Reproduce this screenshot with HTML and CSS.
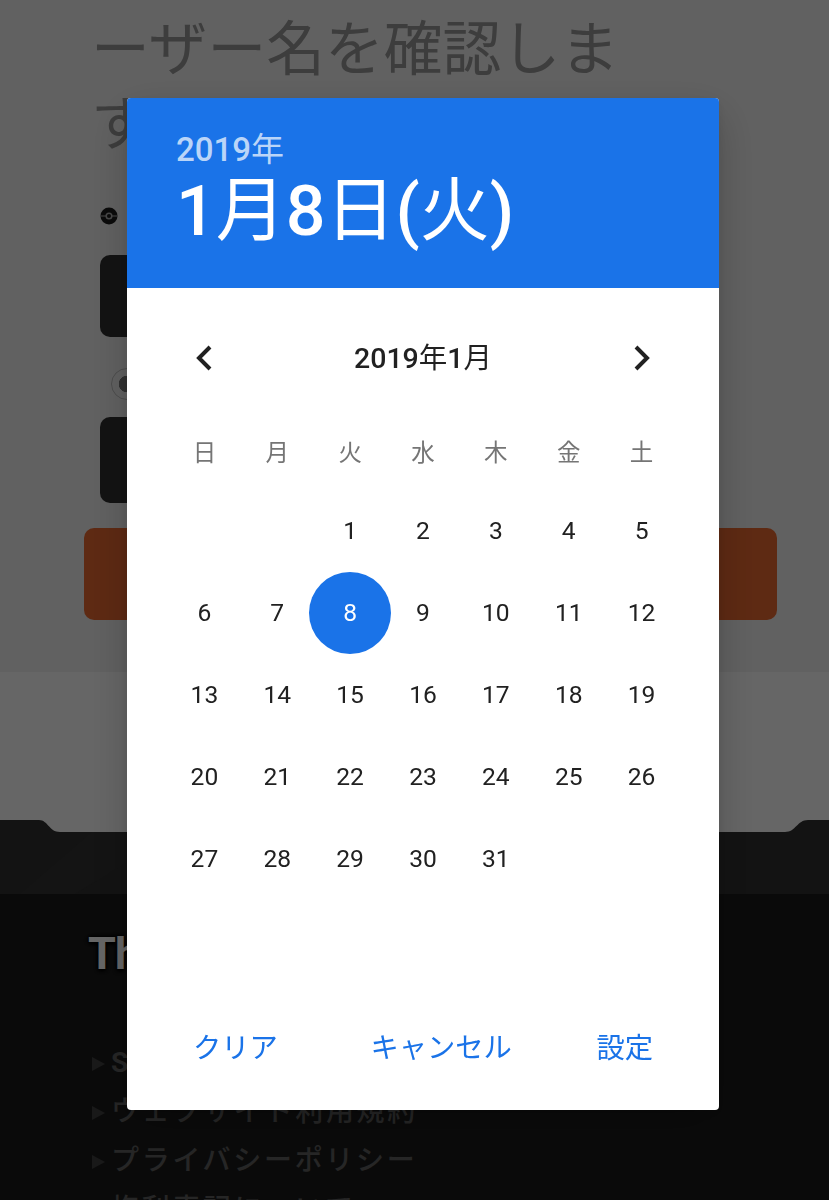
FILE: index.html
```
<!DOCTYPE html>
<html lang="ja">
  <head>
    <meta charset="UTF-8" />
    <meta name="viewport" content="width=device-width, initial-scale=1.0" />
    <title>生年月日</title>
    <link rel="stylesheet" href="styles.css">
  </head>
  <body>
    <main class="page">
      <section class="signup">
        <p class="lead">してトレーナーのユーザー名を確認します</p>

        <svg class="ball" viewBox="0 0 18 18">
          <circle cx="9" cy="9" r="8.5" fill="#1c1c1c" />
          <path d="M0 9h18" stroke="#a0a0a0" stroke-width="1.2" />
          <circle cx="9" cy="9" r="2.8" fill="#1c1c1c" stroke="#b4b4b4" stroke-width="1.5" />
        </svg>

        <div class="field"></div>
        <div class="radio"></div>
        <div class="field field-tall"></div>
        <div class="submit"></div>
      </section>

      <section class="gap"></section>

      <footer class="footer">
        <svg class="footer-edge" viewBox="0 0 829 74">
          <path d="M0 0H39C48 0 49 12 60 12H785C796 12 797 0 808 0H829V74H0Z" fill="#303030" />
          <path d="M92 12H127V42L75 74H20Z" fill="#333" opacity=".6" />
        </svg>
        <div class="footer-body">
          <h2>The</h2>
          <ul class="links">
            <li><b>S</b></li>
            <li>ウェブサイト利用規約</li>
            <li>プライバシーポリシー</li>
            <li>権利表記について</li>
          </ul>
        </div>
      </footer>
    </main>

    <div class="backdrop">
      <div class="dialog">
        <header class="dialog-header">
          <div class="year">2019<span class="kanji">年</span></div>
          <div class="date">1<span class="kanji">月</span>8<span class="kanji">日</span>(<span class="kanji">火</span>)</div>
        </header>

        <div class="month-bar">
          <svg class="arrow" viewBox="0 0 24 32"><path d="M18 5L7 16l11 11" /></svg>
          <div class="month">2019<span class="kanji">年</span>1<span class="kanji">月</span></div>
          <svg class="arrow" viewBox="0 0 24 32"><path d="M6 5l11 11L6 27" /></svg>
        </div>

        <div class="weekdays">
          <span>日</span><span>月</span><span>火</span><span>水</span><span>木</span><span>金</span><span>土</span>
        </div>

        <div class="days">
          <span></span><span></span><span>1</span><span>2</span><span>3</span><span>4</span><span>5</span>
          <span>6</span><span>7</span><span class="selected">8</span><span>9</span><span>10</span><span>11</span><span>12</span>
          <span>13</span><span>14</span><span>15</span><span>16</span><span>17</span><span>18</span><span>19</span>
          <span>20</span><span>21</span><span>22</span><span>23</span><span>24</span><span>25</span><span>26</span>
          <span>27</span><span>28</span><span>29</span><span>30</span><span>31</span>
        </div>

        <div class="actions">
          <button>クリア</button>
          <button class="cancel">キャンセル</button>
          <button>設定</button>
        </div>
      </div>
    </div>
  </body>
</html>
```
FILE: styles.css
```
:root {
  --blue: #1a73e8;
  --ink: #212121;
  --field: #303030;
}

* {
  margin: 0;
  padding: 0;
  box-sizing: border-box;
}

body {
  height: 1200px;
  overflow: hidden;
  font-family: Roboto, "Noto Sans CJK JP", sans-serif;
}

.page {
  height: 1200px;
  overflow: hidden;
  background: #fff;
}

.signup {
  display: flow-root;
  height: 672px;
  padding: 0 52px 0 84px;
  background: #f2f2f2;
}

.lead {
  width: 535px;
  margin: -63px 0 0 7px;
  font-size: 58.8px;
  line-height: 75px;
  color: #989898;
  word-break: break-all;
  line-break: anywhere;
}

.ball {
  display: block;
  width: 18px;
  height: 18px;
  margin: 45px 0 0 16px;
}

.field {
  width: 500px;
  height: 82px;
  margin: 30px 0 0 16px;
  border-radius: 10px;
  background: var(--field);
}

.field-tall {
  height: 86px;
  margin-top: 17px;
}

.radio {
  width: 32px;
  height: 32px;
  margin: 31px 0 0 27px;
  border: 1px solid #c0c0c0;
  border-radius: 50%;
  background: radial-gradient(circle, #7b7b7b 8px, transparent 8.5px);
}

.submit {
  height: 92px;
  margin-top: 25px;
  border-radius: 10px;
  background: #eb6930;
}

.gap {
  height: 148px;
}

.footer-edge {
  display: block;
  width: 829px;
  height: 74px;
}

.footer-body {
  height: 306px;
  padding: 29px 88px 0;
  background: #1b1b1b;
}

.footer h2 {
  font-size: 45px;
  line-height: 62px;
  letter-spacing: -1px;
  color: #fff;
  text-shadow: 0 0 4px #000, 0 0 5px #000, 0 2px 4px #000;
}

.links {
  margin-top: 53px;
  list-style: none;
  font-size: 28px;
  font-weight: 500;
  letter-spacing: 2.7px;
  line-height: 49px;
  color: #606060;
}

.links li {
  display: flex;
  align-items: center;
}

.links li::before {
  content: "";
  margin: 2px 6px 0 4px;
  border-style: solid;
  border-width: 7px 0 7px 13px;
  border-color: transparent transparent transparent #404040;
}

.backdrop {
  position: fixed;
  inset: 0;
  padding: 98px 110px 0 127px;
  background: rgba(0, 0, 0, 0.6);
}

.dialog {
  display: flex;
  flex-direction: column;
  height: 1012px;
  overflow: hidden;
  border-radius: 4px;
  background: #fff;
  color: var(--ink);
  box-shadow: 0 16px 44px rgba(0, 0, 0, 0.2), 0 4px 12px rgba(0, 0, 0, 0.08);
}

.kanji {
  font-weight: 400;
}

.dialog-header {
  height: 190px;
  padding: 32px 49px 0;
  background: var(--blue);
  color: #fff;
  font-weight: 500;
}

.year {
  font-size: 33px;
  line-height: 40px;
  color: #bad5f8;
}

.date {
  font-size: 70px;
  line-height: 83px;
}

.month-bar {
  display: flex;
  align-items: center;
  justify-content: space-between;
  height: 140px;
  padding: 0 65px;
}

.arrow {
  width: 24px;
  height: 32px;
  fill: none;
  stroke: var(--ink);
  stroke-width: 4;
}

.month {
  padding-bottom: 5px;
  font-size: 28.5px;
  font-weight: 500;
}

.weekdays,
.days {
  display: grid;
  grid-template-columns: repeat(7, 72.86px);
  justify-content: center;
  justify-items: center;
  align-items: center;
}

.weekdays {
  height: 46px;
  font-size: 23.5px;
  color: #757575;
}

.days {
  grid-auto-rows: 82.15px;
  margin-top: 16px;
  font-size: 24.6px;
}

.days span {
  padding-bottom: 2px;
}

.days .selected {
  width: 82px;
  height: 82px;
  margin: 0 -5px;
  border-radius: 50%;
  background: var(--blue);
  color: #fff;
  line-height: 81px;
  text-align: center;
}

.actions {
  display: flex;
  justify-content: space-between;
  margin-top: auto;
  padding: 0 66px 39px;
}

.actions button {
  border: none;
  background: none;
  font: inherit;
  font-size: 28.3px;
  line-height: 44px;
  color: var(--blue);
}

.cancel {
  margin-left: 8px;
}
```
